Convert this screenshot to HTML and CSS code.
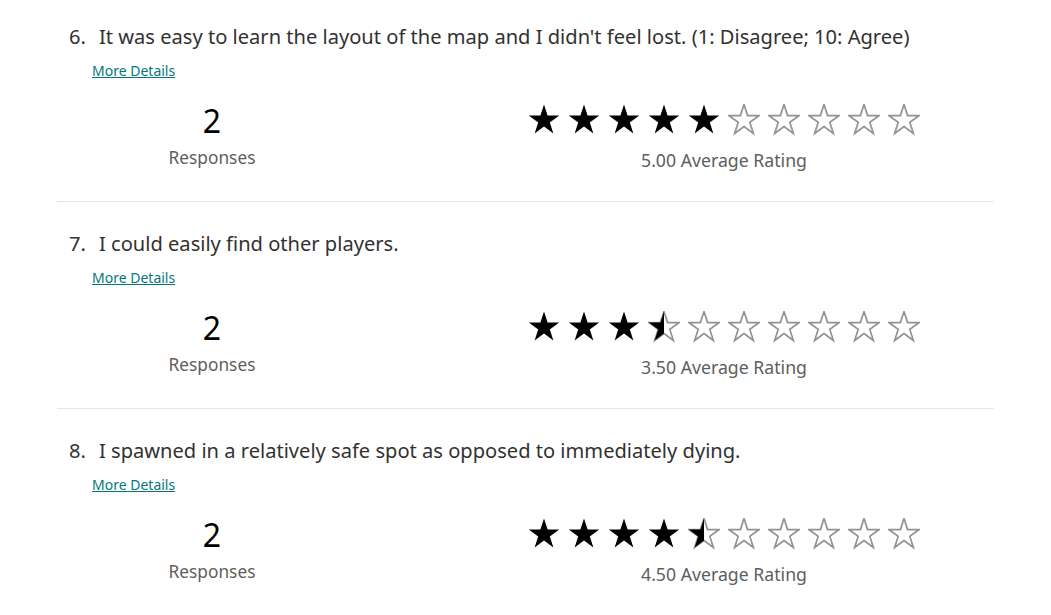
FILE: index.html
```html
<!DOCTYPE html>
<html lang="en">
<head>
<meta charset="utf-8">
<title>Rating summary</title>
<link rel="stylesheet" href="styles.css">
</head>
<body>
<svg class="defs" width="0" height="0" aria-hidden="true">
  <defs>
    <polygon id="star" points="16,0.5 19.59,11.56 31.22,11.56 21.81,18.39 25.4,29.44 16,22.61 6.6,29.44 10.19,18.39 0.78,11.56 12.41,11.56"/>
    <clipPath id="lefthalf"><rect x="0" y="0" width="16" height="32"/></clipPath>
  </defs>
</svg>
<main class="page">
  <section class="question">
    <h2 class="q-title"><span class="q-num">6.</span><span class="q-text">It was easy to learn the layout of the map and I didn't feel lost. (1: Disagree; 10: Agree)</span></h2>
    <a class="more" href="#">More Details</a>
    <div class="stats">
      <div class="responses">
        <div class="count">2</div>
        <div class="label">Responses</div>
      </div>
      <div class="rating">
        <div class="stars">
          <svg class="star full" viewBox="0 0 32 32"><use href="#star"/></svg>
          <svg class="star full" viewBox="0 0 32 32"><use href="#star"/></svg>
          <svg class="star full" viewBox="0 0 32 32"><use href="#star"/></svg>
          <svg class="star full" viewBox="0 0 32 32"><use href="#star"/></svg>
          <svg class="star full" viewBox="0 0 32 32"><use href="#star"/></svg>
          <svg class="star empty" viewBox="0 0 32 32"><use href="#star"/></svg>
          <svg class="star empty" viewBox="0 0 32 32"><use href="#star"/></svg>
          <svg class="star empty" viewBox="0 0 32 32"><use href="#star"/></svg>
          <svg class="star empty" viewBox="0 0 32 32"><use href="#star"/></svg>
          <svg class="star empty" viewBox="0 0 32 32"><use href="#star"/></svg>
        </div>
        <div class="avg">5.00 Average Rating</div>
      </div>
    </div>
  </section>

  <section class="question">
    <h2 class="q-title"><span class="q-num">7.</span><span class="q-text">I could easily find other players.</span></h2>
    <a class="more" href="#">More Details</a>
    <div class="stats">
      <div class="responses">
        <div class="count">2</div>
        <div class="label">Responses</div>
      </div>
      <div class="rating">
        <div class="stars">
          <svg class="star full" viewBox="0 0 32 32"><use href="#star"/></svg>
          <svg class="star full" viewBox="0 0 32 32"><use href="#star"/></svg>
          <svg class="star full" viewBox="0 0 32 32"><use href="#star"/></svg>
          <svg class="star half" viewBox="0 0 32 32"><use class="outline" href="#star"/><use class="fill" href="#star" clip-path="url(#lefthalf)"/></svg>
          <svg class="star empty" viewBox="0 0 32 32"><use href="#star"/></svg>
          <svg class="star empty" viewBox="0 0 32 32"><use href="#star"/></svg>
          <svg class="star empty" viewBox="0 0 32 32"><use href="#star"/></svg>
          <svg class="star empty" viewBox="0 0 32 32"><use href="#star"/></svg>
          <svg class="star empty" viewBox="0 0 32 32"><use href="#star"/></svg>
          <svg class="star empty" viewBox="0 0 32 32"><use href="#star"/></svg>
        </div>
        <div class="avg">3.50 Average Rating</div>
      </div>
    </div>
  </section>

  <section class="question">
    <h2 class="q-title"><span class="q-num">8.</span><span class="q-text">I spawned in a relatively safe spot as opposed to immediately dying.</span></h2>
    <a class="more" href="#">More Details</a>
    <div class="stats">
      <div class="responses">
        <div class="count">2</div>
        <div class="label">Responses</div>
      </div>
      <div class="rating">
        <div class="stars">
          <svg class="star full" viewBox="0 0 32 32"><use href="#star"/></svg>
          <svg class="star full" viewBox="0 0 32 32"><use href="#star"/></svg>
          <svg class="star full" viewBox="0 0 32 32"><use href="#star"/></svg>
          <svg class="star full" viewBox="0 0 32 32"><use href="#star"/></svg>
          <svg class="star half" viewBox="0 0 32 32"><use class="outline" href="#star"/><use class="fill" href="#star" clip-path="url(#lefthalf)"/></svg>
          <svg class="star empty" viewBox="0 0 32 32"><use href="#star"/></svg>
          <svg class="star empty" viewBox="0 0 32 32"><use href="#star"/></svg>
          <svg class="star empty" viewBox="0 0 32 32"><use href="#star"/></svg>
          <svg class="star empty" viewBox="0 0 32 32"><use href="#star"/></svg>
          <svg class="star empty" viewBox="0 0 32 32"><use href="#star"/></svg>
        </div>
        <div class="avg">4.50 Average Rating</div>
      </div>
    </div>
  </section>
</main>
</body>
</html>
```

FILE: styles.css
```css
* { box-sizing: border-box; }

html, body {
  margin: 0;
  padding: 0;
  background: #ffffff;
}

body {
  font-family: "Noto Sans", "Open Sans", sans-serif;
  color: #323130;
}

.defs {
  position: absolute;
  width: 0;
  height: 0;
  overflow: hidden;
}

.page {
  width: 937px;
  margin-left: 57px;
}

.question {
  display: flex;
  flex-direction: column;
  padding-top: 28px;
  height: 207px;
  border-bottom: 1px solid #e6e6e6;
}

.question:first-child {
  padding-top: 23px;
  height: 202px;
}

.q-title {
  margin: 0;
  padding-left: 12px;
  display: flex;
  font-size: 20.1px;
  font-weight: 400;
  line-height: 28px;
  color: #323130;
  white-space: nowrap;
}

.q-num {
  width: 30px;
  flex: none;
}

.more {
  align-self: flex-start;
  margin-left: 35px;
  margin-top: 10px;
  font-size: 14px;
  line-height: 20px;
  color: #03787c;
  text-decoration: underline;
}

.stats {
  display: flex;
  margin-top: 20px;
}

.responses {
  width: 310px;
  display: flex;
  flex-direction: column;
  align-items: center;
}

.count {
  font-size: 32px;
  line-height: 40px;
  color: #000000;
}

.label {
  margin-top: 5px;
  font-size: 17.3px;
  line-height: 24px;
  color: #605e5c;
}

.rating {
  margin-left: 162px;
  width: 390px;
  display: flex;
  flex-direction: column;
  align-items: center;
}

.stars {
  display: flex;
  gap: 8px;
  margin-top: 3px;
}

.star {
  width: 32px;
  height: 32px;
  display: block;
}

.star.full use {
  fill: #000000;
}

.star.empty use,
.star.half .outline {
  fill: none;
  stroke: #929292;
  stroke-width: 1.7;
  stroke-linejoin: miter;
}

.star.half .fill {
  fill: #000000;
}

.avg {
  margin-top: 12px;
  font-size: 17.7px;
  line-height: 24px;
  color: #605e5c;
}
```
